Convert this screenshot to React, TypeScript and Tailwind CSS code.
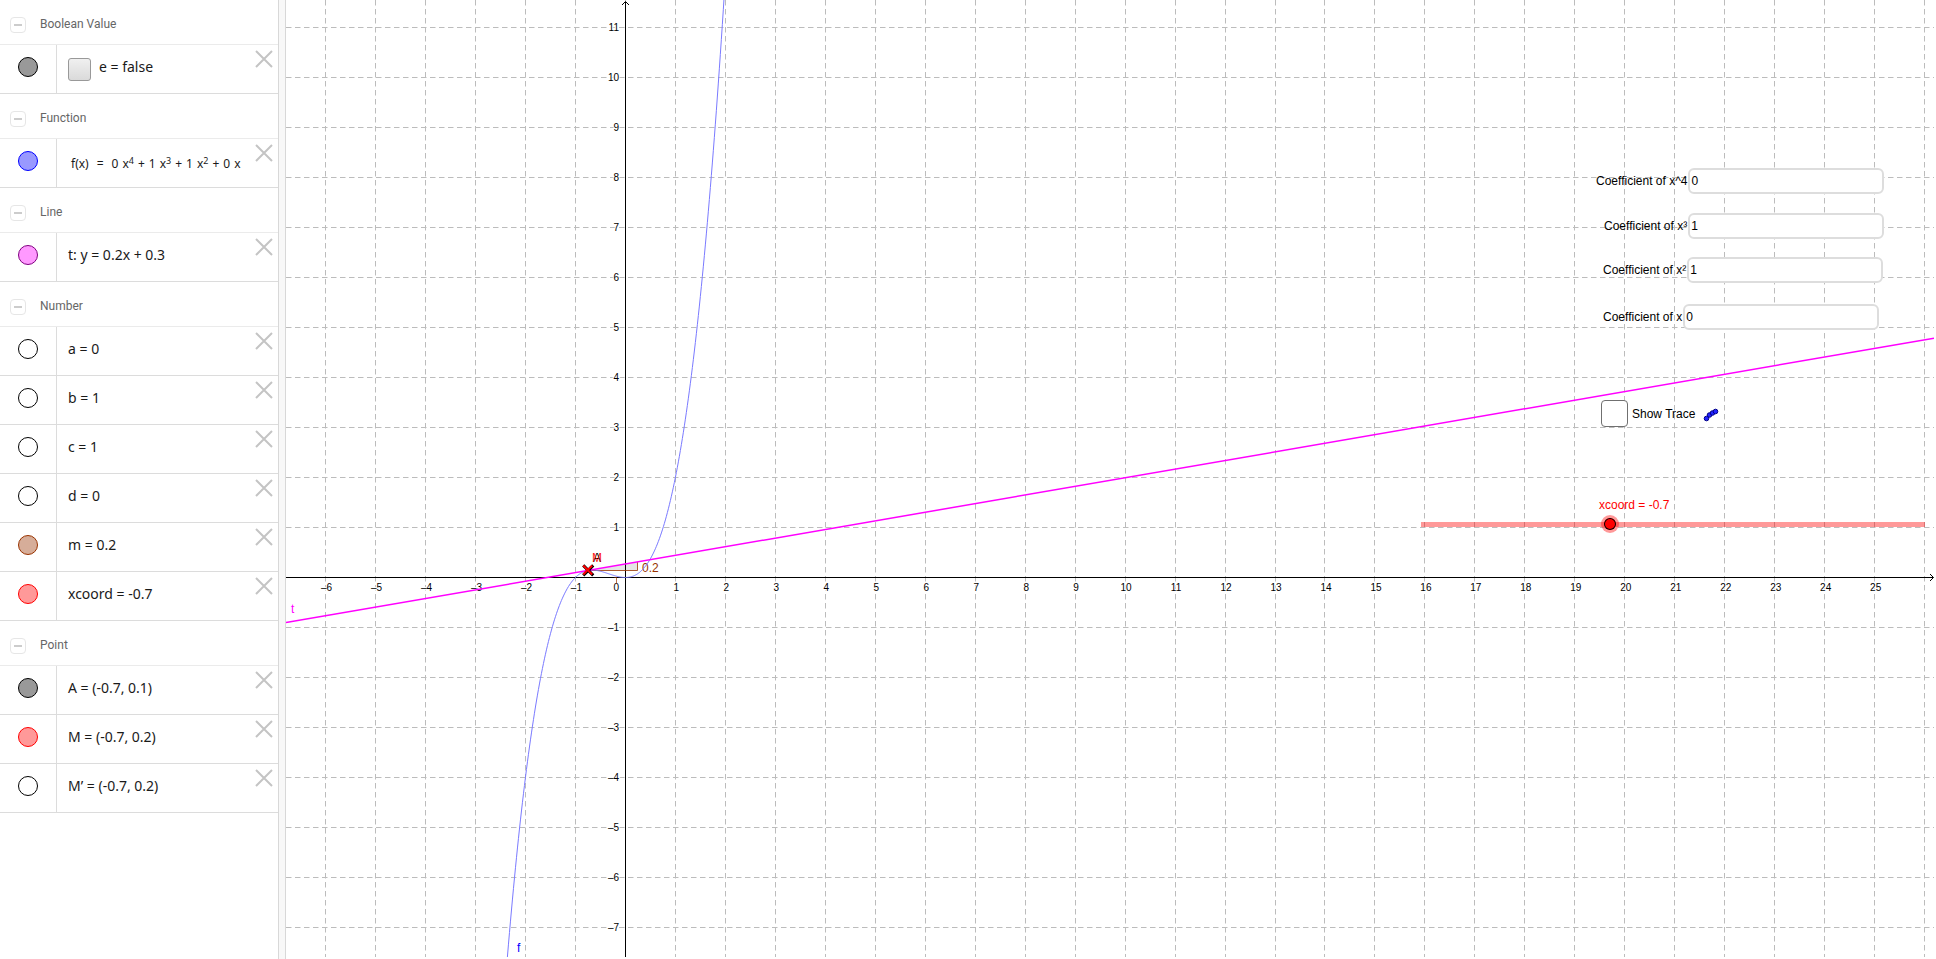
import { Fragment } from "react";

const UNIT = 49.97;
const ORIGIN_X = 339.4;
const ORIGIN_Y = 577.5;

const px = (x: number) => ORIGIN_X + x * UNIT;
const py = (y: number) => ORIGIN_Y - y * UNIT;
const snap = (v: number) => Math.floor(v) + 0.5;

const range = (from: number, to: number) => Array.from({ length: to - from + 1 }, (_, i) => from + i);
const label = (n: number) => (n < 0 ? `–${-n}` : `${n}`);

const XCOORD = -0.744;
const f = (x: number) => x ** 3 + x ** 2;
const slope = 3 * XCOORD ** 2 + 2 * XCOORD;
const tangent = (x: number) => f(XCOORD) + slope * (x - XCOORD);

const curve = Array.from({ length: 241 }, (_, i) => {
  const x = -2.6 + i * 0.02;
  return `${i === 0 ? "M" : "L"}${px(x).toFixed(2)} ${py(f(x)).toFixed(2)}`;
}).join(" ");

const groups = [
  { title: "Boolean Value", items: [{ name: "e", text: "e = false", dot: "border-black bg-[#999999]", checkbox: true }] },
  { title: "Function", items: [{ name: "f", text: "", dot: "border-[#0000ff] bg-[#9999ff]", formula: true }] },
  { title: "Line", items: [{ name: "t", text: "t: y = 0.2x + 0.3", dot: "border-[#800080] bg-[#ff99ff]" }] },
  {
    title: "Number",
    items: [
      { name: "a", text: "a = 0", dot: "border-black bg-white" },
      { name: "b", text: "b = 1", dot: "border-black bg-white" },
      { name: "c", text: "c = 1", dot: "border-black bg-white" },
      { name: "d", text: "d = 0", dot: "border-black bg-white" },
      { name: "m", text: "m = 0.2", dot: "border-[#993300] bg-[#d6ad99]" },
      { name: "xcoord", text: "xcoord = -0.7", dot: "border-[#ff0000] bg-[#ff9999]" },
    ],
  },
  {
    title: "Point",
    items: [
      { name: "A", text: "A = (-0.7, 0.1)", dot: "border-black bg-[#999999]" },
      { name: "M", text: "M = (-0.7, 0.2)", dot: "border-[#ff0000] bg-[#ff9999]" },
      { name: "M'", text: "M’ = (-0.7, 0.2)", dot: "border-black bg-white" },
    ],
  },
];

type Item = { name: string; text: string; dot: string; checkbox?: boolean; formula?: boolean };

const coefficients = [
  { id: "x4", text: "Coefficient of x^4", value: "0", position: "left-[1310px] top-[168px]" },
  { id: "x3", text: "Coefficient of x³", value: "1", position: "left-[1318px] top-[213px]" },
  { id: "x2", text: "Coefficient of x²", value: "1", position: "left-[1317px] top-[257px]" },
  { id: "x1", text: "Coefficient of x", value: "0", position: "left-[1317px] top-[304px]" },
];

function Formula() {
  return (
    <span className="flex items-baseline pt-[6px] pl-[3px] text-xs whitespace-nowrap">
      <span>f(x)</span>
      <span className="px-2">=</span>
      {[["0", "4"], ["1", "3"], ["1", "2"]].map(([coef, power]) => (
        <Fragment key={power}>
          <span>{coef}</span>
          <span className="pl-1">
            x<sup className="text-[9px]">{power}</sup>
          </span>
          <span className="px-1">+</span>
        </Fragment>
      ))}
      <span>0</span>
      <span className="pl-1">x</span>
    </span>
  );
}

function Row({ item }: { item: Item }) {
  return (
    <li className="flex h-[49px] border-b border-[#dcdcdc]">
      <div className="flex w-[57px] shrink-0 justify-center border-r border-[#dcdcdc] pt-3">
        <button type="button" aria-label={`Show ${item.name}`} className={`size-5 rounded-full border ${item.dot}`} />
      </div>
      <div className="flex min-w-0 flex-1 items-center overflow-hidden pb-1 pl-[11px] text-sm text-[#1a1a1a]">
        {item.checkbox && (
          <input
            id="bool-e"
            type="checkbox"
            className="mt-1 mr-2 size-[23px] shrink-0 appearance-none rounded-[3px] border border-[#999] bg-linear-to-b from-[#f0f0f0] to-[#dadada]"
          />
        )}
        {item.checkbox ? <label htmlFor="bool-e">{item.text}</label> : item.formula ? <Formula /> : item.text}
      </div>
      <button type="button" aria-label={`Delete ${item.name}`} className="mr-[5px] h-7 w-[18px] shrink-0 text-[#c4c4c4]">
        <svg viewBox="0 0 18 18" className="size-[18px]" stroke="currentColor" strokeWidth="2">
          <path d="M1 1 L17 17 M17 1 L1 17" />
        </svg>
      </button>
    </li>
  );
}

function AlgebraView() {
  return (
    <aside className="w-[279px] shrink-0 overflow-hidden border-r border-[#d8d8d8] font-['Noto_Sans',sans-serif]">
      {groups.map((group) => (
        <section key={group.title}>
          <header className="flex h-[45px] items-center border-b border-[#ebebeb] pt-[6px] pl-[10px]">
            <button
              type="button"
              aria-label={`Collapse ${group.title}`}
              className="flex size-4 items-center justify-center rounded border border-[#e6e6e6]"
            >
              <span className="h-[2px] w-2 bg-[#cccccc]" />
            </button>
            <h2 className="pb-[2px] pl-[14px] font-[Roboto,sans-serif] text-xs text-[#666]">{group.title}</h2>
          </header>
          <ul>
            {group.items.map((item) => (
              <Row key={item.name} item={item} />
            ))}
          </ul>
        </section>
      ))}
    </aside>
  );
}

function Plot() {
  const cx = px(XCOORD);
  const cy = py(f(XCOORD));
  return (
    <svg className="block h-full w-full" fontFamily="'Liberation Sans', Arial, sans-serif">
      {/* grid */}
      <g stroke="#bcbcbc" strokeDasharray="5.5 3.5">
        {range(-6, 26).map((n) => (
          <line key={n} x1={snap(px(n))} x2={snap(px(n))} y1="0" y2="957" />
        ))}
        {range(-7, 11).map((n) => (
          <line key={n} y1={snap(py(n))} y2={snap(py(n))} x1="0" x2="100%" />
        ))}
      </g>

      {/* axes */}
      <g stroke="#000" fill="none">
        <path d="M339.5 957 V2 M336 5 L339.5 1.5 L343 5" />
        <path d="M0 577.5 H1647 M1644 574 L1647.5 577.5 L1644 581" />
      </g>
      <g fontSize="10" stroke="#fff" strokeWidth="2" paintOrder="stroke">
        {range(-6, 25).map((n) => (
          <text key={n} x={n === 0 ? px(0) - 9 : px(n) + 1} y="591" textAnchor="middle">
            {label(n)}
          </text>
        ))}
        {range(-7, 11)
          .filter((n) => n !== 0)
          .map((n) => (
            <text key={n} x="333" y={Math.round(py(n) + 3.5)} textAnchor="end">
              {label(n)}
            </text>
          ))}
      </g>

      {/* slope triangle */}
      <path d={`M${cx} ${cy} H351.5 V${py(tangent(0.246))} Z`} fill="#000" fillOpacity="0.1" />
      <path d={`M${cx} 570.5 H351.5 V${py(tangent(0.246))}`} fill="none" stroke="#993300" strokeOpacity="0.8" />
      <path d="M328.5 577.5 H330.5 V584" fill="none" stroke="#993300" strokeOpacity="0.7" />
      <text x="356" y="572" fontSize="12" fill="#993300">
        0.2
      </text>

      <path d={curve} fill="none" stroke="#7a7aff" />
      <line x1="0" y1={py(tangent(-6.792))} x2="1648" y2={py(tangent(26.188))} stroke="#ff00ff" strokeWidth="1.5" />

      {/* points A and M */}
      <path d={`M${cx - 5} ${cy - 5} l10 10 m0 -10 l-10 10`} stroke="#000" strokeWidth="3" />
      <path d={`M${cx - 5} ${cy - 5} l9 9 m0 -9 l-9 9`} stroke="#ff0000" strokeWidth="2" />
      <text x="307" y="562" fontSize="12">
        A
      </text>
      <text x="306" y="562" fontSize="12" fill="#ff0000" fillOpacity="0.9">
        M
      </text>

      <text x="5" y="613" fontSize="12" fill="#ff00ff">
        t
      </text>
      <text x="231" y="952" fontSize="12" fill="#0000ff">
        f
      </text>
    </svg>
  );
}

function GraphicsView() {
  return (
    <main className="relative min-w-0 flex-1 overflow-hidden pr-[2px] pb-[2px] font-['Liberation_Sans',Arial,sans-serif] text-xs text-black">
      <Plot />

      {coefficients.map((c) => (
        <div key={c.id} className={`absolute flex items-center gap-px ${c.position}`}>
          <label htmlFor={c.id} className="whitespace-nowrap">
            {c.text}
          </label>
          <input
            id={c.id}
            type="text"
            defaultValue={c.value}
            className="h-[26px] w-[196px] rounded-md border-2 border-[#dddddd] bg-white px-px"
          />
        </div>
      ))}

      <label className="absolute top-[400px] left-[1315px] flex items-center gap-1">
        <input type="checkbox" className="size-[27px] appearance-none rounded border border-[#707070] bg-white" />
        Show Trace
      </label>
      <svg className="absolute top-[406px] left-[1416px] h-4 w-5" fill="#2222ff" stroke="#000088">
        <circle cx="4.5" cy="12.5" r="2.3" />
        <circle cx="7.5" cy="9" r="2.3" />
        <circle cx="10.5" cy="7" r="2.3" />
        <circle cx="13.5" cy="5.5" r="2.3" />
      </svg>

      <div className="absolute top-[497px] left-[1135px] w-[504px]">
        <label htmlFor="xcoord" className="block pl-[178px] leading-4 text-[#ff0000]">
          xcoord = -0.7
        </label>
        <input
          id="xcoord"
          type="range"
          min="-2"
          max="1.4"
          step="0.01"
          defaultValue="-0.74"
          className="mt-[2px] block h-[18px] w-full appearance-none bg-transparent [&::-webkit-slider-runnable-track]:h-[5px] [&::-webkit-slider-runnable-track]:bg-[#ff0000]/40 [&::-webkit-slider-thumb]:-mt-[7px] [&::-webkit-slider-thumb]:size-[18px] [&::-webkit-slider-thumb]:appearance-none [&::-webkit-slider-thumb]:rounded-full [&::-webkit-slider-thumb]:border-[3px] [&::-webkit-slider-thumb]:border-[#ff0000]/40 [&::-webkit-slider-thumb]:bg-[#ff0000] [&::-webkit-slider-thumb]:bg-clip-padding [&::-webkit-slider-thumb]:shadow-[inset_0_0_0_1px_black]"
        />
      </div>
    </main>
  );
}

export default function App() {
  return (
    <div className="flex h-screen min-h-[820px] overflow-hidden bg-white">
      <AlgebraView />
      <div className="w-[7px] shrink-0 border-r border-[#d8d8d8] bg-[#f8f8f8]" />
      <GraphicsView />
    </div>
  );
}
